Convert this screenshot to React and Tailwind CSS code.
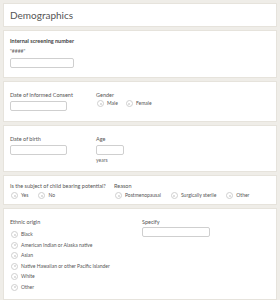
import React from "react";

// small radio circle with a faint centre dot
function Radio({ label }) {
    return (
        <div className="flex items-center gap-[3px]">
            <span className="w-[7px] h-[7px] rounded-full border border-[#cfcfcf] flex items-center justify-center">
                <span className="w-[2px] h-[2px] rounded-full bg-[#d4d4d4]" />
            </span>
            <span className="text-[5px] text-[#555]">{label}</span>
        </div>
    );
}

function Input({ w }) {
    return <div className={`h-[10px] border border-[#cfcfcf] rounded-[2px] bg-white ${w}`} />;
}

function Card({ children, className }) {
    return (
        <div className={`bg-white border border-[#e6e3dc] px-[6px] ${className}`}>
            {children}
        </div>
    );
}

export default function App() {
    return (
        <div
            className="w-[280px] h-[300px] bg-[#efede8] px-[3px] pt-[3px] flex flex-col gap-[3px] overflow-hidden"
            style={{ fontFamily: "Lato, 'Open Sans', sans-serif" }}
        >
            {/* Header */}
            <Card className="h-[24px] flex items-center">
                <span className="text-[10px] text-[#555]">Demographics</span>
            </Card>

            {/* Screening number */}
            <Card className="h-[48px] pt-[6px]">
                <div className="text-[5.5px] leading-[8px] font-bold text-[#444]">Internal screening number</div>
                <div className="text-[5px] leading-[8px] text-[#666] mt-[2px]">"####"</div>
                <div className="mt-[3px]">
                    <Input w="w-[64px]" />
                </div>
            </Card>

            {/* Consent + gender */}
            <Card className="h-[41px] pt-[9px] flex">
                <div className="w-[86px]">
                    <div className="text-[5.5px] leading-[8px] text-[#555]">Date of Informed Consent</div>
                    <div className="mt-[2px]">
                        <Input w="w-[57px]" />
                    </div>
                </div>
                <div>
                    <div className="text-[5.5px] leading-[8px] text-[#555]">Gender</div>
                    <div className="flex gap-[8px] mt-[1px] pl-[1px]">
                        <Radio label="Male" />
                        <Radio label="Female" />
                    </div>
                </div>
            </Card>

            {/* DOB + age */}
            <Card className="h-[47px] pt-[9px] flex">
                <div className="w-[86px]">
                    <div className="text-[5.5px] leading-[8px] text-[#555]">Date of birth</div>
                    <div className="mt-[2px]">
                        <Input w="w-[57px]" />
                    </div>
                </div>
                <div>
                    <div className="text-[5.5px] leading-[8px] text-[#555]">Age</div>
                    <div className="mt-[2px]">
                        <Input w="w-[28px]" />
                    </div>
                    <div className="text-[5px] leading-[8px] text-[#666] mt-[1px]">years</div>
                </div>
            </Card>

            {/* Child bearing */}
            <Card className="h-[30px] pt-[6px] flex">
                <div className="w-[104px]">
                    <div className="text-[5.5px] leading-[8px] text-[#555]">Is the subject of child bearing potential?</div>
                    <div className="flex gap-[10px] mt-[2px] pl-[1px]">
                        <Radio label="Yes" />
                        <Radio label="No" />
                    </div>
                </div>
                <div>
                    <div className="text-[5.5px] leading-[8px] text-[#555]">Reason</div>
                    <div className="flex gap-[10px] mt-[2px] pl-[1px]">
                        <Radio label="Postmenopausal" />
                        <Radio label="Surgically sterile" />
                        <Radio label="Other" />
                    </div>
                </div>
            </Card>

            {/* Ethnic origin */}
            <Card className="flex-1 pt-[9px] flex">
                <div className="w-[132px]">
                    <div className="text-[5.5px] leading-[8px] text-[#555]">Ethnic origin</div>
                    <div className="flex flex-col gap-[3px] mt-[5px] pl-[1px]">
                        <Radio label="Black" />
                        <Radio label="American Indian or Alaska native" />
                        <Radio label="Asian" />
                        <Radio label="Native Hawaiian or other Pacific Islander" />
                        <Radio label="White" />
                        <Radio label="Other" />
                    </div>
                </div>
                <div>
                    <div className="text-[5.5px] leading-[8px] text-[#555]">Specify</div>
                    <div className="mt-[1px]">
                        <Input w="w-[68px]" />
                    </div>
                </div>
            </Card>
        </div>
    );
}
